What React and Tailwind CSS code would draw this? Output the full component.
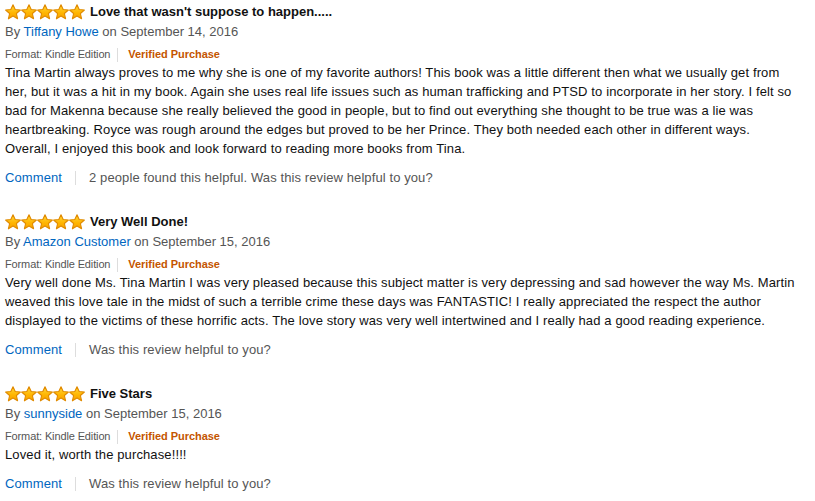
function Star({ id }) {
  return (
    <svg width="16" height="16" viewBox="0 0 16 16" className="block">
      <defs>
        <linearGradient id={id} x1="0" y1="0" x2="0" y2="1">
          <stop offset="0%" stopColor="#ffd83a" />
          <stop offset="60%" stopColor="#ffb400" />
          <stop offset="100%" stopColor="#f7a100" />
        </linearGradient>
      </defs>
      <path
        d="M8 0.7 L10.2 5.5 L15.4 6 L11.4 9.5 L12.6 14.8 L8 12 L3.4 14.8 L4.6 9.5 L0.6 6 L5.8 5.5 Z"
        fill={`url(#${id})`}
        stroke="#e08a00"
        strokeWidth="1.1"
        strokeLinejoin="round"
      />
    </svg>
  )
}

function Stars({ prefix }) {
  return (
    <div className="flex">
      {[0, 1, 2, 3, 4].map((i) => (
        <Star key={i} id={`${prefix}-${i}`} />
      ))}
    </div>
  )
}

function Review({ id, title, author, date, body, helpful }) {
  return (
    <div className="mb-[24px]">
      <div className="flex h-[20px] items-center gap-[5px]">
        <Stars prefix={id} />
        <span className="text-[13px] font-bold text-[#111]">{title}</span>
      </div>
      <div className="h-[20px] text-[13px] leading-[20px] text-[#555]">
        By <a className="text-[#0066c0]">{author}</a> on {date}
      </div>
      <div className="mt-[4px] flex h-[17px] items-center text-[11px] text-[#555]">
        <span className="tracking-[-0.13px]">Format: Kindle Edition</span>
        <span className="mx-[7px] inline-block h-[14px] w-px bg-[#ddd]" />
        <span className="ml-[3px] font-bold tracking-[-0.05px] text-[#c45500]">Verified Purchase</span>
      </div>
      <div className="w-[795px] text-[13px] leading-[19px] tracking-[0.12px] text-[#111]">
        {body.map((p, i) => (
          <div key={i}>{p}</div>
        ))}
      </div>
      <div className="mt-[10px] flex h-[20px] items-center text-[13px] tracking-[0.1px] text-[#555]">
        <a className="text-[#0066c0]">Comment</a>
        <span className="mx-[13px] inline-block h-[14px] w-px bg-[#ddd]" />
        <span>{helpful ? `${helpful} Was this review helpful to you?` : 'Was this review helpful to you?'}</span>
      </div>
    </div>
  )
}

const reviews = [
  {
    id: 'r1',
    title: "Love that wasn't suppose to happen.....",
    author: 'Tiffany Howe',
    date: 'September 14, 2016',
    body: [
      'Tina Martin always proves to me why she is one of my favorite authors! This book was a little different then what we usually get from her, but it was a hit in my book. Again she uses real life issues such as human trafficking and PTSD to incorporate in her story. I felt so bad for Makenna because she really believed the good in people, but to find out everything she thought to be true was a lie was heartbreaking. Royce was rough around the edges but proved to be her Prince. They both needed each other in different ways.',
      'Overall, I enjoyed this book and look forward to reading more books from Tina.',
    ],
    helpful: '2 people found this helpful.',
  },
  {
    id: 'r2',
    title: 'Very Well Done!',
    author: 'Amazon Customer',
    date: 'September 15, 2016',
    body: [
      'Very well done Ms. Tina Martin I was very pleased because this subject matter is very depressing and sad however the way Ms. Martin weaved this love tale in the midst of such a terrible crime these days was FANTASTIC! I really appreciated the respect the author displayed to the victims of these horrific acts. The love story was very well intertwined and I really had a good reading experience.',
    ],
  },
  {
    id: 'r3',
    title: 'Five Stars',
    author: 'sunnyside',
    date: 'September 15, 2016',
    body: ['Loved it, worth the purchase!!!!'],
  },
]

export default function App() {
  return (
    <div
      className="h-[501px] w-[815px] overflow-hidden bg-white pl-[5px] pt-[2px]"
      style={{ fontFamily: '"Liberation Sans", Arial, sans-serif' }}
    >
      {reviews.map((r) => (
        <Review key={r.id} {...r} />
      ))}
    </div>
  )
}
